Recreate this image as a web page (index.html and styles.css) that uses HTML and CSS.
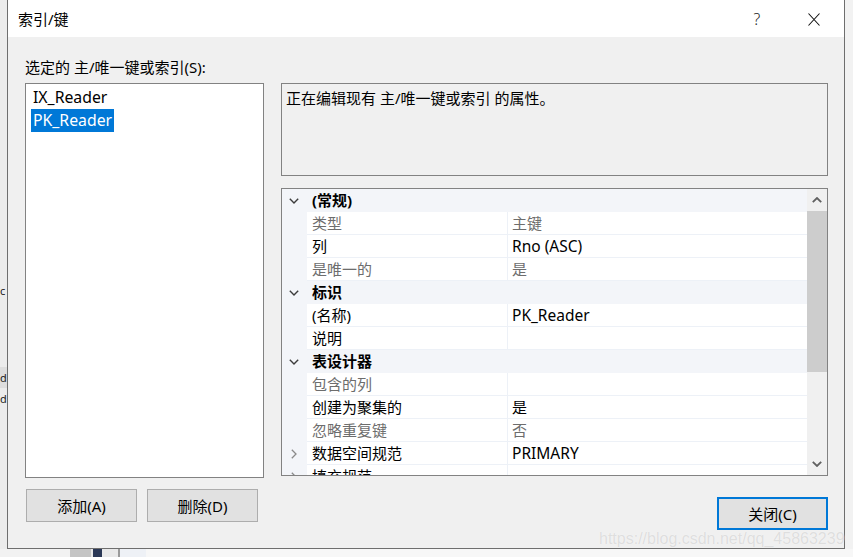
FILE: index.html
```html
<!DOCTYPE html>
<html lang="zh-CN">
<head>
<meta charset="utf-8">
<title>索引/键</title>
<link rel="stylesheet" href="styles.css">
</head>
<body>
<div class="screen">
  <div class="backdrop-left">
    <span class="bg-c">c</span>
    <span class="bg-d hl">d</span>
    <span class="bg-d">d</span>
  </div>

  <div class="dialog">
    <div class="titlebar">
      <span class="title">索引/键</span>
      <span class="help">?</span>
      <span class="close-x"><svg width="12" height="13" viewBox="0 0 12 13"><path d="M0.5 0.5 L11.5 12.5 M11.5 0.5 L0.5 12.5" stroke="#111" stroke-width="1.1" fill="none"/></svg></span>
    </div>
    <div class="content">
      <div class="label">选定的 主/唯一键或索引(S):</div>
      <div class="main">
        <div class="left-col">
          <div class="listbox">
            <div class="item"><span class="item-text">IX_Reader</span></div>
            <div class="item"><span class="item-text sel">PK_Reader</span></div>
          </div>
          <div class="btnrow">
            <button class="btn">添加(A)</button>
            <button class="btn">删除(D)</button>
          </div>
        </div>
        <div class="right-col">
          <div class="desc">正在编辑现有 主/唯一键或索引 的属性。</div>
          <div class="grid">
            <div class="rows">
              <div class="row cat"><span class="gut"><svg class="chev" width="10" height="6" viewBox="0 0 10 6"><path d="M0.8 0.8 L5 5 L9.2 0.8" /></svg></span><span class="cname">(常规)</span></div>
              <div class="row"><span class="gut"></span><span class="name dis">类型</span><span class="val dis">主键</span></div>
              <div class="row"><span class="gut"></span><span class="name">列</span><span class="val lat">Rno (ASC)</span></div>
              <div class="row"><span class="gut"></span><span class="name dis">是唯一的</span><span class="val dis">是</span></div>
              <div class="row cat"><span class="gut"><svg class="chev" width="10" height="6" viewBox="0 0 10 6"><path d="M0.8 0.8 L5 5 L9.2 0.8" /></svg></span><span class="cname">标识</span></div>
              <div class="row"><span class="gut"></span><span class="name">(名称)</span><span class="val lat">PK_Reader</span></div>
              <div class="row"><span class="gut"></span><span class="name">说明</span><span class="val"></span></div>
              <div class="row cat"><span class="gut"><svg class="chev" width="10" height="6" viewBox="0 0 10 6"><path d="M0.8 0.8 L5 5 L9.2 0.8" /></svg></span><span class="cname">表设计器</span></div>
              <div class="row"><span class="gut"></span><span class="name dis">包含的列</span><span class="val"></span></div>
              <div class="row"><span class="gut"></span><span class="name">创建为聚集的</span><span class="val">是</span></div>
              <div class="row"><span class="gut"></span><span class="name dis">忽略重复键</span><span class="val dis">否</span></div>
              <div class="row"><span class="gut"><svg class="chev-r" width="6" height="10" viewBox="0 0 6 10"><path d="M0.8 0.8 L5 5 L0.8 9.2" /></svg></span><span class="name">数据空间规范</span><span class="val lat">PRIMARY</span></div>
              <div class="row"><span class="gut"><svg class="chev-r" width="6" height="10" viewBox="0 0 6 10"><path d="M0.8 0.8 L5 5 L0.8 9.2" /></svg></span><span class="name">填充规范</span><span class="val"></span></div>
            </div>
            <div class="scrollbar">
              <div class="sb-btn"><svg width="10" height="6" viewBox="0 0 10 6"><path d="M0.8 5.2 L5 1 L9.2 5.2" /></svg></div>
              <div class="sb-track"><div class="thumb"></div></div>
              <div class="sb-btn"><svg width="10" height="6" viewBox="0 0 10 6"><path d="M0.8 0.8 L5 5 L9.2 0.8" /></svg></div>
            </div>
          </div>
          <button class="btn close-btn">关闭(C)</button>
        </div>
      </div>
    </div>
  </div>

  <div class="backdrop-right"></div>
  <div class="backdrop-bottom">
    <span class="bb b1"></span>
    <span class="bb b2"></span>
    <span class="bb b3"></span>
    <span class="bb b4"></span>
    <span class="bb b5"></span>
    <span class="bb b6"></span>
    <span class="bb b7"></span>
  </div>

  <div class="watermark">https://blog.csdn.net/qq_45863239</div>
</div>
</body>
</html>
```

FILE: styles.css
```css
* { box-sizing: border-box; }

body {
  margin: 0;
  width: 853px;
  height: 557px;
  overflow: hidden;
  background: #f0f0f0;
  font-family: "Noto Sans", "Noto Sans CJK SC", sans-serif;
  font-size: 15px;
  color: #000;
}

.screen {
  position: relative;
  display: grid;
  grid-template-columns: 7px 838px 8px;
  grid-template-rows: 549px 8px;
  width: 853px;
  height: 557px;
}

/* background windows */
.backdrop-left {
  grid-column: 1;
  grid-row: 1;
  background: #ececec;
  display: flex;
  flex-direction: column;
  font-size: 11px;
  color: #222;
}
.bg-c { margin-top: 281px; line-height: 20px; height: 20px; }
.bg-d { line-height: 22px; height: 22px; }
.bg-d.hl { margin-top: 66px; background: #dedede; height: 21px; line-height: 21px; }

.backdrop-right {
  grid-column: 3;
  grid-row: 1;
  background: #f2f2f2;
}

.backdrop-bottom {
  grid-column: 1 / span 3;
  grid-row: 2;
  display: flex;
  background: #f7f7f7;
}
.bb { display: block; height: 100%; }
.b1 { width: 70px; background: #f2f2f2; }
.b2 { width: 21px; background: #c4c4c4; }
.b3 { width: 2px; background: #e8e8e8; }
.b4 { width: 9px; background: #2b3856; }
.b5 { width: 16px; background: #e9e9e9; }
.b6 { width: 2px; background: #9a9a9a; }
.b7 { width: 26px; background: #eef1f6; }

/* dialog */
.dialog {
  grid-column: 2;
  grid-row: 1;
  border: 1px solid #6e6e6e;
  border-top: none;
  background: #f0f0f0;
  display: flex;
  flex-direction: column;
}

.titlebar {
  height: 37px;
  background: #fff;
  display: flex;
  align-items: center;
  padding: 0 24px 0 10px;
}
.title {
  font-size: 15px;
  line-height: 20px;
  margin-top: 1px;
}
.help {
  margin-left: auto;
  width: 20px;
  text-align: center;
  font-size: 16px;
  line-height: 20px;
  color: #222;
  font-weight: 300;
}
.close-x {
  display: flex;
  margin-left: 41px;
  margin-top: 1px;
}

.content {
  flex: 1;
  padding: 0 0 0 17px;
}

.label {
  padding-top: 20px;
  line-height: 20px;
  height: 46px;
}

.main {
  display: flex;
  gap: 17px;
}

.left-col {
  width: 239px;
  display: flex;
  flex-direction: column;
}

.listbox {
  height: 395px;
  border: 1px solid #828282;
  background: #fff;
  padding: 2px 0 0 5px;
}
.item {
  height: 23px;
}
.item-text {
  display: inline-block;
  height: 23px;
  line-height: 23px;
  padding: 0 2px;
  font-size: 15.8px;
}
.item-text.sel {
  background: #0078d7;
  color: #fff;
}

.btnrow {
  display: flex;
  gap: 10px;
  margin-top: 11px;
  padding-left: 1px;
}

.btn {
  width: 111px;
  height: 33px;
  background: #e1e1e1;
  border: 1px solid #adadad;
  font-family: inherit;
  font-size: 15px;
  color: #000;
  padding: 0;
  line-height: 20px;
}

.right-col {
  width: 547px;
  display: flex;
  flex-direction: column;
}

.desc {
  height: 93px;
  border: 1px solid #828282;
  background: #f0f0f0;
  padding: 4px 0 0 4px;
  line-height: 20px;
}

.grid {
  margin-top: 12px;
  height: 288px;
  border: 1px solid #828282;
  background: #fff;
  display: flex;
}

.rows {
  width: 525px;
  height: 286px;
  overflow: hidden;
}

.row {
  display: grid;
  grid-template-columns: 25px 201px 299px;
  height: 23px;
}
.row.cat {
  background: #f3f5f9;
}
.gut {
  background: #f3f5f9;
  display: flex;
  align-items: center;
  justify-content: center;
  padding-right: 1px;
}
.chev path {
  fill: none;
  stroke: #3c3c3c;
  stroke-width: 1.4;
}
.chev-r path {
  fill: none;
  stroke: #8a8a8a;
  stroke-width: 1.3;
}
.cname {
  grid-column: 2 / span 2;
  font-weight: 700;
  line-height: 23px;
  padding-left: 5px;
}
.name, .val {
  line-height: 22px;
  height: 23px;
  border-bottom: 1px solid #edf1f7;
  background: #fff;
  white-space: nowrap;
  overflow: hidden;
}
.name {
  padding-left: 5px;
  border-right: 1px solid #edf1f7;
}
.val {
  padding-left: 4px;
}
.val.lat {
  font-size: 15.5px;
}
.dis {
  color: #6d6d6d;
}

.scrollbar {
  width: 20px;
  height: 286px;
  background: #f0f0f0;
  display: flex;
  flex-direction: column;
}
.sb-btn {
  height: 22px;
  display: flex;
  align-items: center;
  justify-content: center;
}
.sb-btn path {
  fill: none;
  stroke: #606060;
  stroke-width: 1.8;
}
.sb-track {
  flex: 1;
}
.thumb {
  height: 161px;
  background: #cdcdcd;
}

.close-btn {
  margin-top: 21px;
  align-self: flex-end;
  border: 2px solid #0078d7;
}

.watermark {
  position: absolute;
  left: 599px;
  top: 529px;
  font-family: "Liberation Sans", Arial, sans-serif;
  font-size: 16px;
  line-height: 20px;
  color: rgba(218, 218, 218, 0.9);
  text-shadow: 0 0 1px rgba(255, 255, 255, 0.9);
  white-space: nowrap;
}
```
